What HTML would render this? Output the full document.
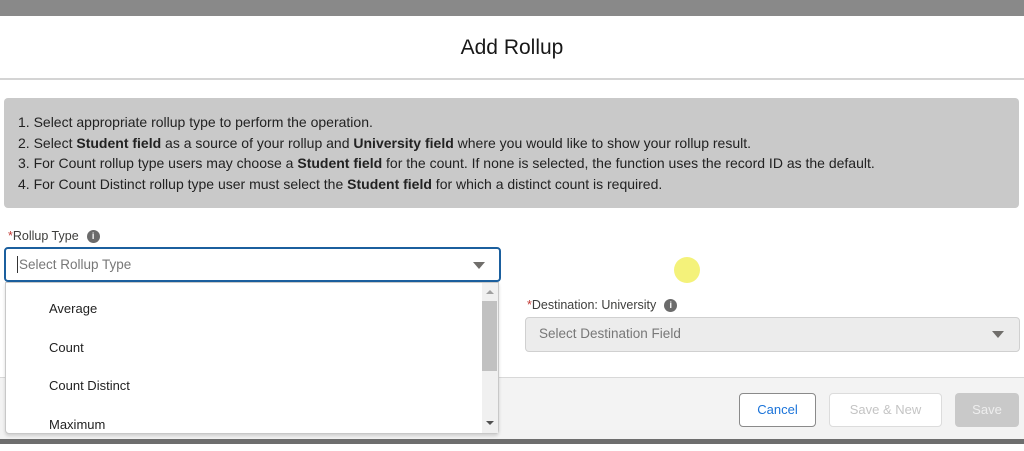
<!DOCTYPE html>
<html><head><style>
*{margin:0;padding:0;box-sizing:border-box}
body{width:1024px;height:451px;background:#fff;font-family:"Liberation Sans",sans-serif;position:relative;overflow:hidden;color:#181818}
.a{position:absolute}
.info{left:4px;top:98px;width:1015px;height:110px;background:#c9c9c9;border-radius:4px;font-size:14px;line-height:20.7px;padding:14px 0 0 14px;color:#222}
.info b{font-weight:bold}
.lbl{font-size:12.5px;color:#3e3e3c}
.lbl .s{color:#c23934}
.ic{display:inline-block;width:13px;height:13px;border-radius:50%;background:#6b6b6b;color:#fff;font-size:9px;font-weight:bold;text-align:center;line-height:13px;vertical-align:middle;margin-left:8px}
.tri{width:0;height:0;border-left:6px solid transparent;border-right:6px solid transparent;border-top:7px solid #706e6b}
.opt{left:49px;font-size:13px;color:#222}
.btn{top:393px;height:34px;border-radius:4px;font-size:13px;text-align:center;line-height:32px}
</style></head><body>
<div class="a" style="left:0;top:0;width:1024px;height:16px;background:#898989"></div>
<div class="a" style="left:0;top:36px;width:1024px;text-align:center;font-size:21px;color:#181818">Add Rollup</div>
<div class="a" style="left:0;top:78px;width:1024px;height:2px;background:#d4d4d4"></div>
<div class="a info">1. Select appropriate rollup type to perform the operation.<br>2. Select <b>Student field</b> as a source of your rollup and <b>University field</b> where you would like to show your rollup result.<br>3. For Count rollup type users may choose a <b>Student field</b> for the count. If none is selected, the function uses the record ID as the default.<br>4. For Count Distinct rollup type user must select the <b>Student field</b> for which a distinct count is required.</div>

<div class="a" style="left:0;top:377px;width:1024px;height:62px;background:#f3f3f3;border-top:1px solid #d8d8d8"></div>
<div class="a" style="left:0;top:439px;width:1024px;height:5px;background:#6e6e6e"></div>

<div class="a lbl" style="left:8px;top:229px"><span class="s">*</span>Rollup Type<span class="ic">i</span></div>
<div class="a" style="left:4px;top:247px;width:497px;height:35px;border:2px solid #1b5f9e;border-radius:4px;background:#fff"></div>
<div class="a" style="left:17px;top:256px;width:1px;height:17px;background:#333"></div>
<div class="a" style="left:19px;top:257px;font-size:13.5px;color:#777">Select Rollup Type</div>
<div class="a tri" style="left:473px;top:262px"></div>

<div class="a lbl" style="left:527px;top:298px"><span class="s">*</span>Destination: University<span class="ic">i</span></div>
<div class="a" style="left:525px;top:317px;width:495px;height:35px;border:1px solid #d0d0d0;border-radius:4px;background:#ececec"></div>
<div class="a" style="left:539px;top:326px;font-size:13.5px;color:#777">Select Destination Field</div>
<div class="a tri" style="left:992px;top:331px"></div>

<div class="a" style="left:674px;top:257px;width:26px;height:26px;border-radius:50%;background:#f4f27a"></div>

<div class="a btn" style="left:739px;width:77px;border:1px solid #8a8a8a;background:#fff;color:#1a73d9">Cancel</div>
<div class="a btn" style="left:829px;width:113px;border:1px solid #dcdcdc;background:#fff;color:#c4c4c4">Save &amp; New</div>
<div class="a btn" style="left:955px;width:64px;background:#c9c9c9;color:#eee;line-height:34px">Save</div>

<div class="a" style="left:5px;top:282px;width:494px;height:152px;background:#fff;border:1px solid #c8c8c8;border-radius:0 0 4px 4px;box-shadow:0 2px 3px rgba(0,0,0,.15)"></div>
<div class="a" style="left:482px;top:283px;width:16px;height:150px;background:#f0f0f0"></div>
<div class="a" style="left:482px;top:301px;width:15px;height:70px;background:#c1c1c1"></div>
<div class="a" style="left:486px;top:290px;border-left:4px solid transparent;border-right:4px solid transparent;border-bottom:4px solid #a0a0a0"></div>
<div class="a" style="left:486px;top:421px;border-left:4px solid transparent;border-right:4px solid transparent;border-top:4px solid #505050"></div>
<div class="a opt" style="top:301px">Average</div>
<div class="a opt" style="top:340px">Count</div>
<div class="a opt" style="top:378px">Count Distinct</div>
<div class="a opt" style="top:417px">Maximum</div>
</body></html>
